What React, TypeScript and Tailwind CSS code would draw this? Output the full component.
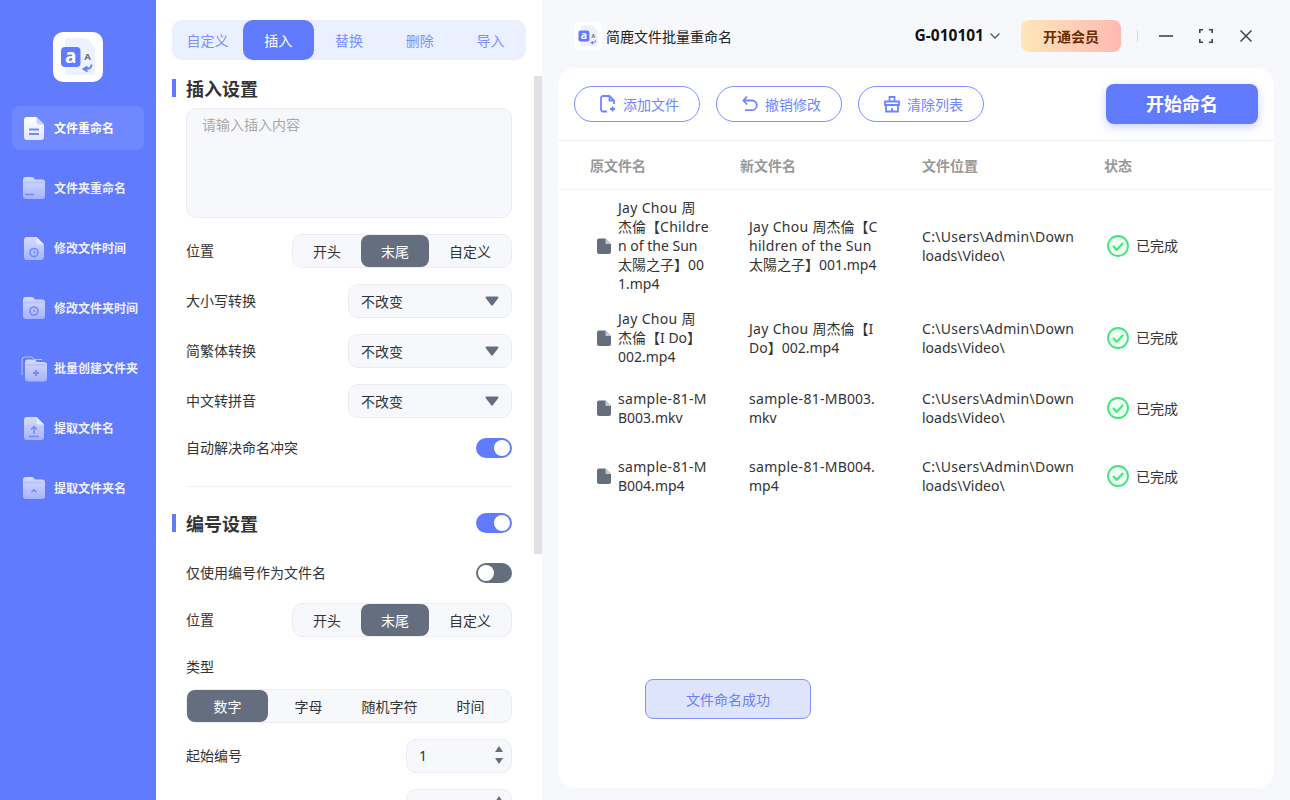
import React from "react";
import { ChevronDown } from "lucide-react";

const Defs = () => (
  <svg className="absolute h-0 w-0">
    <defs>
      <linearGradient id="gA" x1="0" y1="0" x2="0" y2="1">
        <stop offset="0" stopColor="#ffffff" />
        <stop offset="1" stopColor="#e0e5ff" />
      </linearGradient>
      <linearGradient id="gB" x1="0" y1="0" x2="0" y2="1">
        <stop offset="0" stopColor="#d5dcff" />
        <stop offset="1" stopColor="#a5b3ff" />
      </linearGradient>
    </defs>
  </svg>
);

const FileShape = ({ fill, fold }: { fill: string; fold: string }) => (
  <>
    <path d="M3 0h9.500L20 7.500V20a3 3 0 0 1-3 3H3a3 3 0 0 1-3-3V3a3 3 0 0 1 3-3z" fill={fill} transform="translate(1 0)" />
    <path d="M13.500 0L21 7.500h-5a2.500 2.500 0 0 1-2.500-2.500z" fill={fold} />
  </>
);
const FolderShape = () => (
  <>
    <path d="M3 0h6a2 2 0 0 1 1.500.7L12 2.500h7a3 3 0 0 1 3 3V19a3 3 0 0 1-3 3H3a3 3 0 0 1-3-3V3a3 3 0 0 1 3-3z" fill="url(#gB)" />
    <path d="M2 5.500h18" stroke="#b9c4ff" strokeWidth="2" strokeLinecap="round" />
  </>
);

const Clock = ({ cx, cy }: { cx: number; cy: number }) => (
  <g fill="none" stroke="#7388fb" strokeWidth="1.600">
    <circle cx={cx} cy={cy} r="4" />
    <path d={`M${cx} ${cy - 2}v2.200h1.600`} strokeWidth="1.100" />
  </g>
);

const SideIcon = ({ kind }: { kind: number }) => {
  const box = "h-[24px] w-[22px] overflow-visible shrink-0";
  if (kind === 0)
    return (
      <svg viewBox="0 0 22 24" className={box}>
        <FileShape fill="url(#gA)" fold="#c9d2ff" />
        <path d="M6 12.500h10M6 17h10" stroke="#7389fb" strokeWidth="2" />
      </svg>
    );
  if (kind === 1)
    return (
      <svg viewBox="0 0 22 24" className={box}>
        <FolderShape />
        <path d="M2.500 17.500h8" stroke="#7389fb" strokeWidth="1.400" strokeLinecap="round" />
      </svg>
    );
  if (kind === 2)
    return (
      <svg viewBox="0 0 22 24" className={box}>
        <FileShape fill="url(#gB)" fold="#e6eaff" />
        <Clock cx={11} cy={15.500} />
      </svg>
    );
  if (kind === 3)
    return (
      <svg viewBox="0 0 22 24" className={box}>
        <FolderShape />
        <Clock cx={11} cy={14} />
      </svg>
    );
  if (kind === 4)
    return (
      <svg viewBox="0 0 22 24" className={box}>
        <path d="M-1 18V3a3 3 0 0 1 3-3h7l2.500 2.500H19" fill="none" stroke="#b5c1ff" strokeWidth="1" />
        <g transform="translate(2 2.500)">
          <FolderShape />
          <path d="M11 10.500v6M8 13.500h6" stroke="#7389fb" strokeWidth="1.800" />
        </g>
      </svg>
    );
  if (kind === 5)
    return (
      <svg viewBox="0 0 22 24" className={box}>
        <FileShape fill="url(#gB)" fold="#e6eaff" />
        <path d="M11 17v-6.500M8 12.500l3-3 3 3M6 19.500h10" fill="none" stroke="#7389fb" strokeWidth="1.500" />
      </svg>
    );
  return (
    <svg viewBox="0 0 22 24" className={box}>
      <FolderShape />
      <path d="M8.500 15l2.500-2.200 2.500 2.200" fill="none" stroke="#7389fb" strokeWidth="1.600" />
    </svg>
  );
};

const Logo = ({ className }: { className: string }) => (
  <svg viewBox="0 0 50 50" className={className}>
    <path d="M15 6h18l9 9v25a3 3 0 0 1-3 3H15a3 3 0 0 1-3-3V9a3 3 0 0 1 3-3z" fill="#edf2ff" />
    <rect x="8" y="15" width="19.500" height="20" rx="4" fill="#617bff" />
    <text x="17.800" y="31" textAnchor="middle" fontSize="19" fontWeight="700" fill="#fff" fontFamily="Noto Sans">a</text>
    <text x="34.500" y="28" textAnchor="middle" fontSize="9.500" fontWeight="700" fill="#646e7f" fontFamily="Noto Sans">A</text>
    <path d="M38.500 32.500c0 3-2.500 4.500-6 4.500M34.500 34.500L30.500 37l4 2.500" fill="none" stroke="#617bff" strokeWidth="1.800" />
  </svg>
);

const sideItems = ["文件重命名", "文件夹重命名", "修改文件时间", "修改文件夹时间", "批量创建文件夹", "提取文件名", "提取文件夹名"];

const Sidebar = () => (
  <aside className="flex w-[156px] shrink-0 flex-col items-center bg-[#617bff]">
    <div className="mt-8 flex h-[50px] w-[50px] items-center justify-center rounded-[10px] bg-white">
      <Logo className="h-[50px] w-[50px]" />
    </div>
    <nav className="mt-6 flex w-[132px] flex-col gap-4">
      {sideItems.map((t, i) => (
        <div
          key={t}
          className={`flex h-[44px] items-center gap-[9px] rounded-lg pt-[2px] pl-[11px] text-[12px] font-bold ${
            i === 0 ? "bg-[#7088ff] text-white" : "text-[#eef0ff]"
          }`}
        >
          <SideIcon kind={i} />
          <span className="whitespace-nowrap">{t}</span>
        </div>
      ))}
    </nav>
  </aside>
);

const Toggle = ({ on }: { on: boolean }) => (
  <span className={`flex h-5 w-9 rounded-full p-0.5 ${on ? "justify-end bg-[#617bff]" : "justify-start bg-[#646e7f]"}`}>
    <span className="h-4 w-4 rounded-full bg-white" />
  </span>
);

const Heading = ({ children, toggle }: { children: string; toggle?: boolean }) => (
  <div className="flex h-5 items-center">
    <span className="h-[18px] w-1 bg-[#617bff]" />
    <span className="ml-[10px] pt-[2px] text-[18px] leading-5 font-bold text-[#333]">{children}</span>
    {toggle && (
      <span className="ml-auto">
        <Toggle on />
      </span>
    )}
  </div>
);

const Seg = ({ items, active, widths, className }: { items: string[]; active: number; widths: string[]; className: string }) => (
  <div className={`flex h-[34px] rounded-[10px] border border-[#ebedf3] bg-[#f7f8fc] text-[14px] text-[#333] ${className}`}>
    {items.map((t, i) => (
      <span
        key={t}
        className={`flex h-8 items-center justify-center rounded-lg ${widths[i]} ${i === active ? "bg-[#646e7f] text-white" : ""}`}
      >
        {t}
      </span>
    ))}
  </div>
);

const Label = ({ children }: { children: string }) => <span className="pb-[2px]">{children}</span>;

const Select = ({ label }: { label: string }) => (
  <div className="flex h-[34px] items-center justify-between text-[14px] text-[#333]">
    <Label>{label}</Label>
    <div className="flex h-[34px] w-[164px] items-center justify-between rounded-[10px] border border-[#ebedf3] bg-[#f7f8fc] pr-3 pl-3">
      <span>不改变</span>
      <svg viewBox="0 0 14 10" className="h-[10px] w-[14px]">
        <path d="M1.500 0.500h11a1 1 0 0 1 .8 1.600L8 9a1.200 1.200 0 0 1-2 0L.7 2.100A1 1 0 0 1 1.500.5z" fill="#646e7f" />
      </svg>
    </div>
  </div>
);

const Spinner = () => (
  <svg viewBox="0 0 8 18" className="mb-0.5 h-[18px] w-2">
    <path d="M4 0L8 6H0zM0 12h8L4 18z" fill="#646e7f" />
  </svg>
);

const Panel = () => (
  <section className="flex w-[386px] shrink-0 overflow-hidden bg-white">
    <div className="flex w-[378px] flex-col pt-5 pr-2 pl-4">
      <div className="flex h-10 shrink-0 rounded-[10px] bg-[#eaf0ff] text-[14px] text-[#7b90ff]">
        {["自定义", "插入", "替换", "删除", "导入"].map((t, i) => (
          <span key={t} className={`flex h-10 flex-1 items-center justify-center rounded-[10px] ${i === 1 ? "bg-[#617bff] text-white" : ""}`}>
            {t}
          </span>
        ))}
      </div>
      <div className="mt-[18px] w-[340px] shrink-0">
        <Heading>插入设置</Heading>
      </div>
      <div className="mt-[10px] ml-[14px] flex w-[326px] shrink-0 flex-col">
        <div className="h-[110px] rounded-[10px] border border-[#ebedf3] bg-[#f7f8fc] pt-[5px] pl-[15px] text-[14px] text-[#aaaaaa]">请输入插入内容</div>
        <div className="mt-4 flex h-[34px] items-center justify-between text-[14px] text-[#333]">
          <Label>位置</Label>
          <Seg items={["开头", "末尾", "自定义"]} active={1} widths={["w-[68px]", "w-[68px]", "w-[82px]"]} className="w-[220px]" />
        </div>
        <div className="mt-4 flex flex-col gap-4">
          <Select label="大小写转换" />
          <Select label="简繁体转换" />
          <Select label="中文转拼音" />
        </div>
        <div className="mt-5 flex h-5 items-center justify-between text-[14px] text-[#333]">
          <Label>自动解决命名冲突</Label>
          <Toggle on />
        </div>
        <div className="mt-7 h-px bg-[#f0f1f5]" />
      </div>
      <div className="mt-[26px] w-[340px] shrink-0">
        <Heading toggle>编号设置</Heading>
      </div>
      <div className="ml-[14px] flex w-[326px] shrink-0 flex-col">
        <div className="mt-[30px] flex h-5 items-center justify-between text-[14px] text-[#333]">
          <Label>仅使用编号作为文件名</Label>
          <Toggle on={false} />
        </div>
        <div className="mt-5 flex h-[34px] items-center justify-between text-[14px] text-[#333]">
          <Label>位置</Label>
          <Seg items={["开头", "末尾", "自定义"]} active={1} widths={["w-[68px]", "w-[68px]", "w-[82px]"]} className="w-[220px]" />
        </div>
        <div className="mt-5 h-5 text-[14px] leading-5 text-[#333]">类型</div>
        <Seg items={["数字", "字母", "随机字符", "时间"]} active={0} widths={["w-[81px]", "w-[81px]", "w-[81px]", "w-[81px]"]} className="mt-3 w-[326px]" />
        <div className="mt-4 flex h-[34px] shrink-0 items-center justify-between text-[14px] text-[#333]">
          <Label>起始编号</Label>
          <div className="flex h-[34px] w-[106px] items-center justify-between rounded-[10px] border border-[#ebedf3] bg-[#f7f8fc] pr-2 pl-[12px]">
            <Label>1</Label>
            <Spinner />
          </div>
        </div>
        <div className="mt-4 flex h-[34px] shrink-0 items-center justify-between text-[14px] text-[#333]">
          <span className="pt-[2px]">增量编号</span>
          <div className="flex h-[34px] w-[106px] items-center justify-end rounded-[10px] border border-[#ebedf3] bg-[#f7f8fc] pr-2">
            <Spinner />
          </div>
        </div>
      </div>
    </div>
    <div className="w-2 shrink-0 pt-[76px]">
      <div className="h-[478px] bg-[#e0e0e8]" />
    </div>
  </section>
);

const WinIcons = () => (
  <div className="ml-[21px] flex items-center">
    <svg viewBox="0 0 14 14" className="h-[14px] w-[14px] text-[#444]">
      <path d="M0 7h14" stroke="currentColor" strokeWidth="1.600" />
    </svg>
    <svg viewBox="0 0 14 14" className="ml-[26px] h-[14px] w-[14px] text-[#444]">
      <path d="M.8 4V.8H4M10 .8h3.200V4M13.200 10v3.200H10M4 13.200H.8V10" fill="none" stroke="currentColor" strokeWidth="1.600" />
    </svg>
    <svg viewBox="0 0 14 14" className="ml-[26px] h-[14px] w-[14px] text-[#444]">
      <path d="M1.500 1.500l11 11M12.500 1.500l-11 11" stroke="currentColor" strokeWidth="1.500" />
    </svg>
  </div>
);

const TopBar = () => (
  <header className="flex h-[68px] shrink-0 items-center pt-1 pr-[37px] pl-8">
    <div className="flex h-7 w-7 items-center justify-center rounded-md bg-white">
      <Logo className="h-7 w-7" />
    </div>
    <span className="ml-1 text-[14px] text-[#222]">简鹿文件批量重命名</span>
    <div className="ml-auto flex items-center">
      <span className="text-[15.500px] font-bold text-[#111]">G-010101</span>
      <ChevronDown className="ml-[3px] h-4 w-4 text-[#555]" strokeWidth={2} />
      <button className="ml-[18px] h-8 w-[100px] rounded-lg bg-gradient-to-r from-[#ffe6b9] to-[#ffb9b3] text-[14px] font-bold text-[#6b2c00]">开通会员</button>
      <span className="ml-4 h-3 w-px bg-[#d8d8de]" />
      <WinIcons />
    </div>
  </header>
);

const ToolIcon = ({ kind }: { kind: number }) => {
  const cls = "h-[18px] w-4";
  if (kind === 0)
    return (
      <svg viewBox="0 0 16 18" className={cls} fill="none" stroke="#6f86ff" strokeWidth="1.800">
        <path d="M7 16.500H3A2 2 0 0 1 1 14.500V3A2 2 0 0 1 3 1h6.500L14 5.500V9" />
        <path d="M9.500 1v4.500H14M12.500 11.500v5M10 14h5" />
      </svg>
    );
  if (kind === 1)
    return (
      <svg viewBox="0 0 16 18" className={cls} fill="none" stroke="#6f86ff" strokeWidth="1.800">
        <path d="M5 1.500L1.500 5.500 5 9.500" />
        <path d="M1.500 5.500h8.500a4.800 4.800 0 0 1 0 9.600H3" />
      </svg>
    );
  return (
    <svg viewBox="0 0 16 18" className={cls} fill="none" stroke="#6f86ff" strokeWidth="1.800">
      <path d="M5.500 6V2h5V6M1 6.500h14v3.500H1zM2 10v6.500h12V10M8 13v3.500" />
    </svg>
  );
};

type Row = { a: string[]; b: string[]; c: string[] };
const rows: Row[] = [
  { a: ["Jay Chou 周", "杰倫【Childre", "n of the Sun", "太陽之子】00", "1.mp4"], b: ["Jay Chou 周杰倫【C", "hildren of the Sun", "太陽之子】001.mp4"], c: ["C:\\Users\\Admin\\Down", "loads\\Video\\"] },
  { a: ["Jay Chou 周", "杰倫【I Do】", "002.mp4"], b: ["Jay Chou 周杰倫【I", "Do】002.mp4"], c: ["C:\\Users\\Admin\\Down", "loads\\Video\\"] },
  { a: ["sample-81-M", "B003.mkv"], b: ["sample-81-MB003.", "mkv"], c: ["C:\\Users\\Admin\\Down", "loads\\Video\\"] },
  { a: ["sample-81-M", "B004.mp4"], b: ["sample-81-MB004.", "mp4"], c: ["C:\\Users\\Admin\\Down", "loads\\Video\\"] },
];

const Line = ({ text }: { text: string }) => {
  const parts = text.split(/(Jay Chou |sample-81-M|Children?|hildren of the Sun|C:\\Users\\Admin\\Down)/);
  return (
    <div>
      {parts.map((p, i) => (
        <span key={i} className={i % 2 === 1 ? "tracking-[0.3px]" : ""}>
          {p}
        </span>
      ))}
    </div>
  );
};

const Lines = ({ lines }: { lines: string[] }) => (
  <div className="text-[14px] leading-[19px] whitespace-nowrap text-[#333]">
    {lines.map((l) => (
      <Line key={l} text={l} />
    ))}
  </div>
);

const Card = () => (
  <main className="relative mr-4 mb-3 ml-4 flex flex-1 flex-col rounded-[18px] bg-white">
    <div className="flex h-[73px] shrink-0 items-center gap-4 border-b border-[#f0f1f5] pr-4 pl-4">
      {["添加文件", "撤销修改", "清除列表"].map((t, i) => (
        <button key={t} className="flex h-9 w-[126px] items-center gap-[7px] rounded-full border border-[#7c90ff] pl-[25px] text-[14px] text-[#7086ff]">
          <ToolIcon kind={i} />
          {t}
        </button>
      ))}
      <button className="ml-auto h-10 w-[152px] rounded-lg bg-[#617bff] text-[18px] font-bold text-white shadow-[0_3px_10px_rgba(97,123,255,0.35)]">开始命名</button>
    </div>
    <div className="grid h-[49px] shrink-0 grid-cols-[150px_182px_182px_1fr] items-center border-b border-[#f0f1f5] pl-8 text-[14px] font-bold text-[#999]">
      <span>原文件名</span>
      <span>新文件名</span>
      <span>文件位置</span>
      <span>状态</span>
    </div>
    <div className="flex flex-col">
      {rows.map((r, idx) => (
        <div key={idx} className="grid min-h-[68px] grid-cols-[150px_182px_182px_1fr] items-center py-2 pl-8">
          <div className="flex items-center gap-[7px] pl-[7px]">
            <svg viewBox="0 0 14 16" className="h-4 w-[14px] shrink-0">
              <path d="M2 0.500h6.500L14 6v8a2 2 0 0 1-2 2H2a2 2 0 0 1-2-2V2.500a2 2 0 0 1 2-2z" fill="#646e7f" />
              <path d="M8.500 .5L14 6H9.500a1 1 0 0 1-1-1z" fill="#c6cad2" />
            </svg>
            <Lines lines={r.a} />
          </div>
          <div className="pl-[9px]">
            <Lines lines={r.b} />
          </div>
          <Lines lines={r.c} />
          <div className="flex items-center gap-[7px] pl-[3px] text-[14px] text-[#333]">
            <svg viewBox="0 0 22 22" className="h-[22px] w-[22px]">
              <circle cx="11" cy="11" r="10" fill="#f0fff4" stroke="#3fe67a" strokeWidth="1.800" />
              <path d="M6 11l3.700 3.700L16.200 8" fill="none" stroke="#3fe67a" strokeWidth="2" />
            </svg>
            已完成
          </div>
        </div>
      ))}
    </div>
    <div className="absolute top-[611px] left-[87px] flex h-10 w-[166px] items-center justify-center rounded-lg border border-[#8094ff] bg-[#dfe4fd] text-[14px] text-[#6a80ff]">文件命名成功</div>
  </main>
);

export default function App() {
  return (
    <div className="flex h-screen w-screen overflow-hidden bg-[#f7f8fc] font-['Noto_Sans','Noto_Sans_CJK_SC',sans-serif]">
      <Defs />
      <Sidebar />
      <Panel />
      <div className="flex min-w-0 flex-1 flex-col">
        <TopBar />
        <Card />
      </div>
    </div>
  );
}
